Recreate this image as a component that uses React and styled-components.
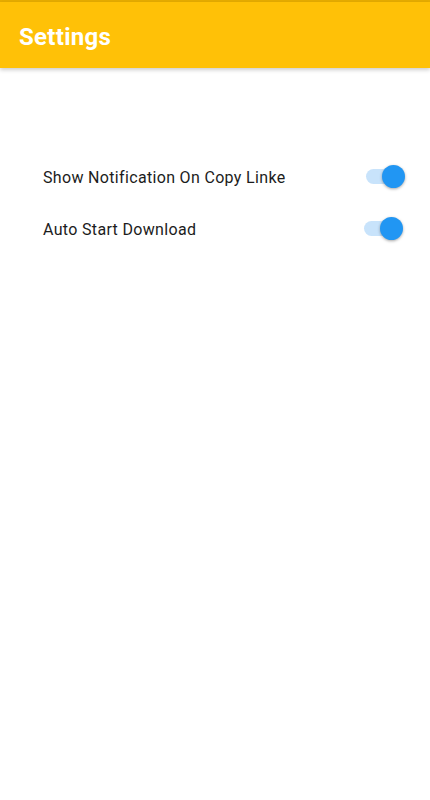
import React, { useState } from "react";
import styled, { createGlobalStyle } from "styled-components";

const GlobalStyle = createGlobalStyle`
  html, body {
    margin: 0;
    padding: 0;
    background: #ffffff;
  }
  body {
    font-family: Roboto, "Noto Sans", sans-serif;
  }
`;

const Page = styled.div`
  width: 430px;
  min-height: 800px;
  background: #ffffff;
`;

const StatusStrip = styled.div`
  height: 2px;
  background: #e6ac00;
`;

const AppBar = styled.header`
  height: 66px;
  background: #ffc107;
  display: flex;
  align-items: center;
  padding: 0 19px;
  box-shadow: 0 2px 4px rgba(0, 0, 0, 0.2);
  position: relative;
`;

const Title = styled.h1`
  margin: 0;
  color: #ffffff;
  font-size: 24px;
  font-weight: 700;
  letter-spacing: 0.3px;
  padding-top: 4px;
`;

const List = styled.div`
  display: flex;
  flex-direction: column;
  padding: 83px 0 0 43px;
`;

const Row = styled.div`
  display: flex;
  align-items: center;
  justify-content: space-between;
  height: 52px;
  padding-right: ${(p) => p.$inset}px;
`;

const Label = styled.span`
  font-size: 16px;
  color: #1c1c1c;
  letter-spacing: 0.33px;
`;

const Switch = styled.button`
  position: relative;
  width: 40px;
  height: 24px;
  padding: 0;
  border: none;
  background: transparent;
  cursor: pointer;
`;

const Track = styled.span`
  position: absolute;
  left: 0;
  top: 4px;
  width: 34px;
  height: 15px;
  border-radius: 8px;
  background: ${(p) => (p.$on ? "#c8e3fb" : "#cfcfcf")};
`;

const Thumb = styled.span`
  position: absolute;
  top: 0;
  left: ${(p) => (p.$on ? "16px" : "0")};
  width: 23px;
  height: 23px;
  border-radius: 50%;
  background: ${(p) => (p.$on ? "#2196f3" : "#fafafa")};
  box-shadow: 0 1px 3px rgba(0, 0, 0, 0.35);
`;

const SETTINGS = [
  { id: "notify", label: "Show Notification On Copy Linke", inset: 24 },
  { id: "autostart", label: "Auto Start Download", inset: 26 },
];

const App = () => {
  const [values, setValues] = useState({ notify: true, autostart: true });

  const toggle = (id) => setValues((v) => ({ ...v, [id]: !v[id] }));

  return (
    <Page>
      <GlobalStyle />
      <StatusStrip />
      <AppBar>
        <Title>Settings</Title>
      </AppBar>
      <List>
        {SETTINGS.map((s) => (
          <Row key={s.id} $inset={s.inset}>
            <Label>{s.label}</Label>
            <Switch onClick={() => toggle(s.id)} aria-pressed={values[s.id]}>
              <Track $on={values[s.id]} />
              <Thumb $on={values[s.id]} />
            </Switch>
          </Row>
        ))}
      </List>
    </Page>
  );
};

export default App;
